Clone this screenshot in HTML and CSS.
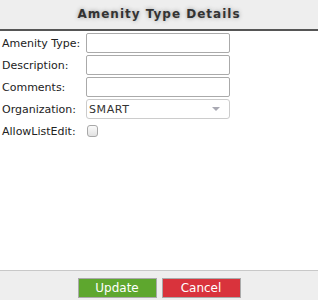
FILE: index.html
```html
<!DOCTYPE html>
<html>
<head>
  <title>Amenity Type Details</title>
  <link rel="stylesheet" href="styles.css">
</head>
<body>
  <div class="dialog">
    <div class="dialog-title">Amenity Type Details</div>

    <div class="form">
      <label for="amenityType">Amenity Type:</label>
      <input type="text" id="amenityType">

      <label for="description">Description:</label>
      <input type="text" id="description">

      <label for="comments">Comments:</label>
      <input type="text" id="comments">

      <label for="organization">Organization:</label>
      <div class="select">
        <span>SMART</span>
        <svg class="arrow" width="8" height="4" viewBox="0 0 8 4"><path d="M0 0H8L4 4Z" fill="#a9a9b3"/></svg>
      </div>

      <label for="allowListEdit">AllowListEdit:</label>
      <div><span class="check" id="allowListEdit"></span></div>
    </div>

    <div class="dialog-footer">
      <button class="btn update">Update</button>
      <button class="btn cancel">Cancel</button>
    </div>
  </div>
</body>
</html>
```

FILE: styles.css
```css
body {
  margin: 0;
  font-family: 'DejaVu Sans', Verdana, sans-serif;
  font-size: 11px;
  color: #222;
  background: #fff;
}

.dialog {
  width: 318px;
  height: 300px;
  display: flex;
  flex-direction: column;
}

.dialog-title {
  height: 29px;
  line-height: 29px;
  background: #eeeeee;
  border-bottom: 2px solid #555;
  text-align: center;
  font-weight: bold;
  font-size: 12px;
  letter-spacing: 1px;
  color: #333;
  text-shadow: 0 0 4px #999;
}

.form {
  flex: 1;
  display: grid;
  grid-template-columns: 84px 144px;
  grid-auto-rows: 20px;
  row-gap: 2px;
  align-items: center;
  padding: 2px 0 0 2px;
}

.form label {
  white-space: nowrap;
}

.form input {
  box-sizing: border-box;
  width: 144px;
  height: 20px;
  border: 1px solid #aaa;
  border-radius: 2px;
  margin: 0;
  padding: 0 3px;
  font-family: inherit;
  font-size: 11px;
}

.select {
  box-sizing: border-box;
  height: 20px;
  border: 1px solid #ccc;
  border-radius: 3px;
  display: flex;
  align-items: center;
  justify-content: space-between;
  padding: 0 9px 0 2px;
  color: #333;
  font-size: 11px;
  letter-spacing: 0.6px;
}

.check {
  display: block;
  box-sizing: border-box;
  width: 11px;
  height: 12px;
  margin: 0 0 0 1px;
  border: 1px solid #a8a8a8;
  border-radius: 3px;
  background: linear-gradient(#fafafa, #e2e2e2);
}

.dialog-footer {
  height: 30px;
  background: #eeeeee;
  border-top: 1px solid #c8c8c8;
  display: flex;
  justify-content: center;
  gap: 5px;
  padding-top: 7px;
  box-sizing: border-box;
}

.btn {
  width: 79px;
  height: 20px;
  border: 1px solid #aaa;
  color: #fff;
  font-family: inherit;
  font-size: 12px;
  padding: 0;
  cursor: pointer;
}

.update {
  background: #5ea72e;
}

.cancel {
  background: #d9333c;
}
```
